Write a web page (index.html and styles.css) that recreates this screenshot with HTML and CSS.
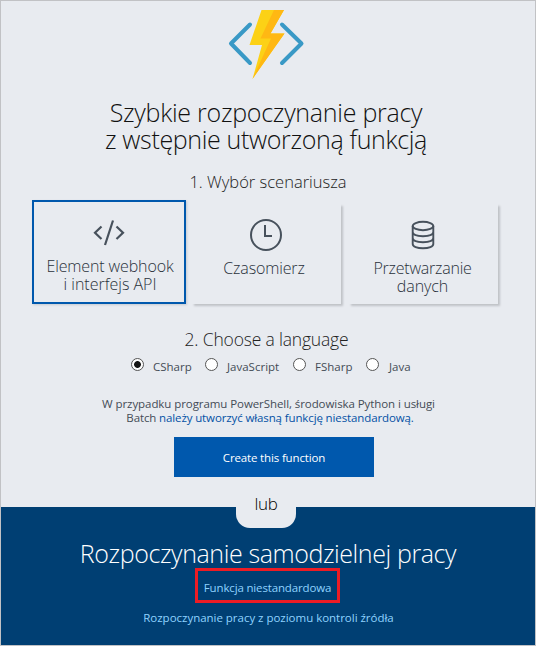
FILE: index.html
```html
<!DOCTYPE html>
<html lang="pl">
<head>
<meta charset="utf-8">
<title>Azure Functions</title>
<link rel="stylesheet" href="styles.css">
</head>
<body>
<main class="page">
  <section class="quickstart">
    <svg class="logo" width="80" height="74" viewBox="0 0 80 74">
      <g fill="none" stroke="#3999c6" stroke-width="4" stroke-linecap="round" stroke-linejoin="round">
        <path d="M24 18.500 5 37.500 24 57"/>
        <path d="M56 18.500 75.500 37.500 56 57"/>
      </g>
      <path fill="#fcd116" d="M35.500 4H58L44.500 27.500H58.500L26.500 73 36 39H23.500z"/>
      <path fill="#ffb813" d="M48 4H58L44.500 27.500H58.500L26.500 73 45 32.500H34.500z"/>
    </svg>
    <h1 class="title">
      <span class="title-a">Szybkie rozpoczynanie pracy</span>
      <span class="title-b">z wstępnie utworzoną funkcją</span>
    </h1>
    <h2 class="step step-one">1. Wybór scenariusza</h2>
    <div class="cards">
      <div class="card selected">
        <svg class="icon" width="34" height="28" viewBox="0 0 34 28" fill="none" stroke="#47515c" stroke-width="2.200">
          <path d="M9.500 7.500 3 13.700 9.500 20M24.500 7.500 31 13.700 24.500 20M21 1.500 13 26"/>
        </svg>
        <span class="w-element">Element webhook</span>
        <span class="w-api">i interfejs API</span>
      </div>
      <div class="card">
        <svg class="icon" width="34" height="34" viewBox="0 0 34 34" fill="none" stroke="#47515c" stroke-width="2">
          <circle cx="17" cy="17" r="15"/><path d="M16 7V18H23"/>
        </svg>
        <span class="w-timer">Czasomierz</span>
      </div>
      <div class="card">
        <svg class="icon" width="24" height="30" viewBox="0 0 24 30" fill="none" stroke="#47515c" stroke-width="1.900">
          <ellipse cx="12" cy="6" rx="10.300" ry="4.200"/>
          <path d="M1.700 6V24C1.700 26.500 6 28.300 12 28.300S22.300 26.500 22.300 24V6M1.700 12C1.700 14.500 6 16.200 12 16.200S22.300 14.500 22.300 12M1.700 18C1.700 20.500 6 22.200 12 22.200S22.300 20.500 22.300 18"/>
        </svg>
        <span class="w-data">Przetwarzanie</span>
        <span class="w-data2">danych</span>
      </div>
    </div>
    <h2 class="step step-two">2. Choose a language</h2>
    <div class="languages">
      <label class="lang-cs"><i class="radio on"></i><span>CSharp</span></label>
      <label class="lang-js"><i class="radio"></i><span>JavaScript</span></label>
      <label class="lang-fs"><i class="radio"></i><span>FSharp</span></label>
      <label class="lang-java"><i class="radio"></i><span>Java</span></label>
    </div>
    <p class="note">
      <span class="note-a">W przypadku programu PowerShell, środowiska Python i usługi</span>
      <span class="note-b">Batch <a>należy utworzyć własną funkcję niestandardową.</a></span>
    </p>
    <div class="create">Create this function</div>
  </section>
  <section class="own">
    <div class="tab">lub</div>
    <h1 class="own-title">Rozpoczynanie samodzielnej pracy</h1>
    <a class="custom">Funkcja niestandardowa</a>
    <a class="source">Rozpoczynanie pracy z poziomu kontroli źródła</a>
  </section>
</main>
</body>
</html>
```
FILE: styles.css
```css
* { box-sizing: border-box; }
body { margin: 0; font-family: "Open Sans", "Noto Sans", sans-serif; }
h1, h2, p { margin: 0; font-weight: 300; }
svg { display: block; }
.page {
  width: 536px;
  height: 646px;
  border: 1px solid #c1c2c5;
  background: #e8ebf0;
}
.quickstart { height: 506px; padding-top: 5px; white-space: nowrap; }
.logo { margin-left: 225px; }
.title { margin-top: 19px; padding-right: 4px; font-size: 25px; line-height: 27px; text-align: center; color: #111; }
.title span { display: block; }
.title-a { letter-spacing: -0.26px; }
.title-b { letter-spacing: -0.34px; }
.step { line-height: 22px; text-align: center; color: #222; }
.step-one { margin-top: 18px; font-size: 16.5px; }
.cards {
  display: grid;
  grid-template-columns: 154px 149px 149px;
  column-gap: 6px;
  margin: 7px 0 0 31px;
  height: 104px;
}
.card {
  display: flex;
  flex-direction: column;
  align-items: center;
  height: 100px;
  margin-top: 4px;
  font-size: 16px;
  font-weight: 300;
  line-height: 18px;
  color: #29313b;
  box-shadow: 2px 2px 2px #bfc2c7;
}
.card:last-child { margin-left: 2px; margin-right: -2px; }
.card .icon { flex: none; margin-top: 14px; margin-right: 1px; }
.card .icon + span { margin-top: 7px; }
.card:last-child .icon { margin-top: 16px; }
.card:last-child .icon + span { margin-top: 9px; }
.card.selected { height: 104px; margin-top: 0; border: 2px solid #0058ad; box-shadow: 1px 1px 2px #c6cad0; }
.card.selected .icon { margin-top: 17px; }
.card.selected .icon + span { margin-top: 10px; }
.w-element { letter-spacing: -0.13px; margin-left: 2px; }
.w-api { margin-left: 2px; }
.w-timer { letter-spacing: -0.13px; margin-right: 5px; }
.w-data { letter-spacing: -0.22px; margin-right: 2px; }
.w-data2 { letter-spacing: -0.06px; margin-right: 2px; }
.step-two { margin-top: 24px; padding-right: 3px; font-size: 17.5px; letter-spacing: -0.18px; }
.languages {
  display: flex;
  height: 16px;
  margin: 8px 0 0 130px;
  font-size: 11.5px;
  line-height: 18px;
  color: #444c56;
}
.languages label { display: flex; }
.radio {
  flex: none;
  width: 13px;
  height: 13px;
  margin-right: 9px;
  border: 1px solid #555;
  border-radius: 50%;
  background: #fff;
}
.radio.on { background: radial-gradient(circle, #151515 3px, #fff 3.8px); }
.lang-cs { width: 74px; }
.lang-js { width: 88px; }
.lang-fs { width: 73px; }
.lang-java .radio { margin-right: 10px; }
.note { margin-top: 23px; text-align: center; font-size: 11.5px; font-weight: 400; line-height: 13.5px; color: #444c56; }
.note span { display: block; }
.note-a { letter-spacing: -0.075px; padding-left: 1px; }
.note-b { letter-spacing: -0.12px; padding-left: 4px; }
.note a { color: #0451a5; }
.create {
  width: 200px;
  height: 40px;
  margin: 13px 0 0 173px;
  background: #0058ad;
  color: #fff;
  text-align: center;
  font-size: 11.5px;
  font-weight: 500;
  line-height: 41px;
  letter-spacing: -0.15px;
}
.own { height: 138px; background: #003f73; text-align: center; white-space: nowrap; }
.tab {
  position: absolute;
  left: 236px;
  top: 491px;
  width: 60px;
  height: 37px;
  border-radius: 0 0 14px 14px;
  background: #e8ebf0;
  font-size: 17px;
  font-weight: 300;
  line-height: 25px;
  letter-spacing: -0.3px;
}
.own-title { padding: 33px 0 0 0; color: #fff; font-size: 25px; line-height: 27px; letter-spacing: -0.4px; }
.custom {
  display: block;
  width: 145px;
  height: 35px;
  margin: 1px 0 0 194px;
  border: 3px solid #ed1c24;
  color: #8fd3ff;
  font-size: 11.5px;
  line-height: 34px;
  letter-spacing: -0.15px;
}
.source { display: block; margin-top: 7px; padding-left: 1px; color: #8fd3ff; font-size: 11.5px; line-height: 16px; letter-spacing: -0.02px; }
```
